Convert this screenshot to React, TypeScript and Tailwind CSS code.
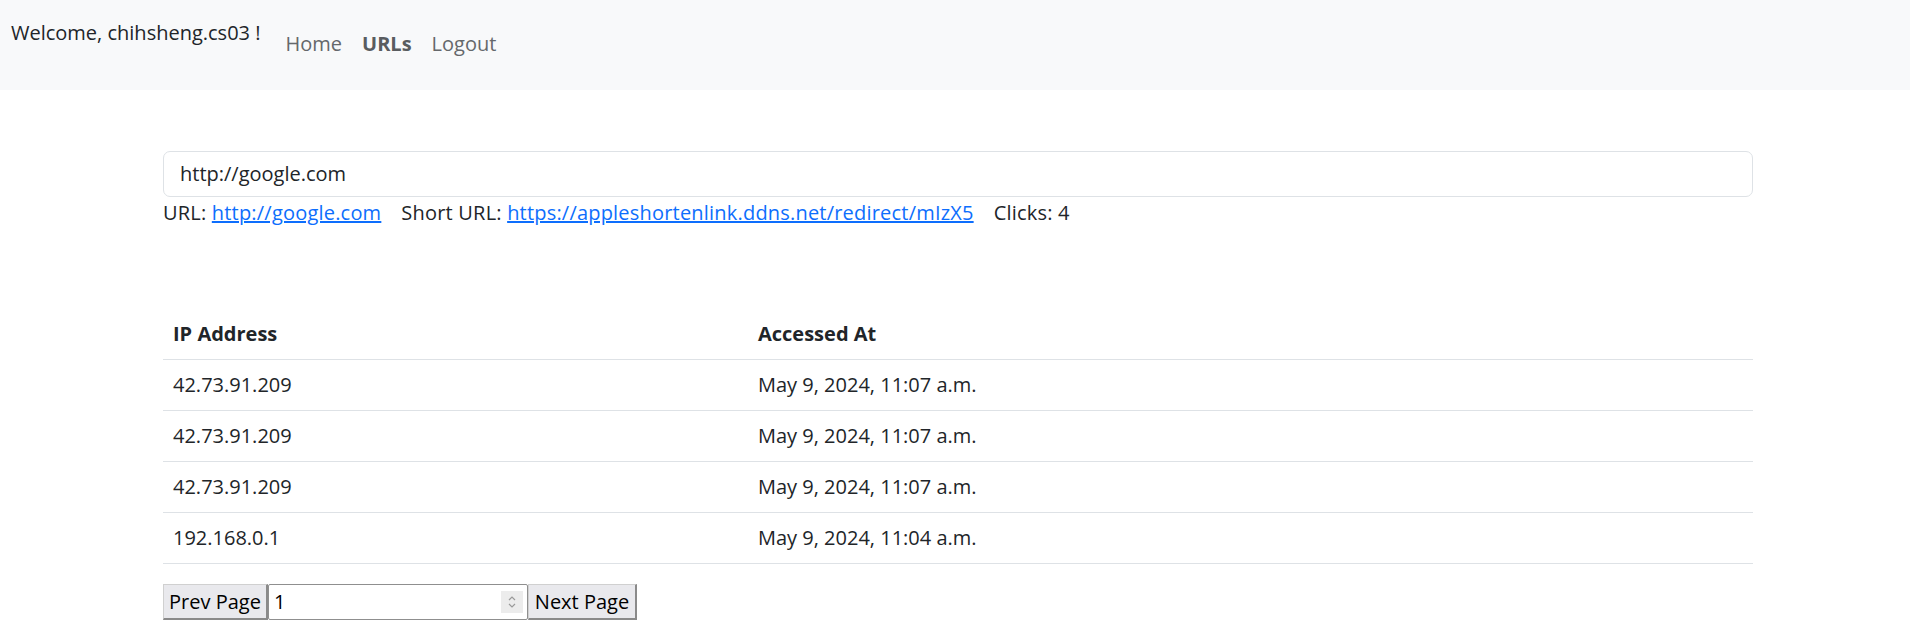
import React from "react";

const rows = [
  { ip: "42.73.91.209", at: "May 9, 2024, 11:07 a.m." },
  { ip: "42.73.91.209", at: "May 9, 2024, 11:07 a.m." },
  { ip: "42.73.91.209", at: "May 9, 2024, 11:07 a.m." },
  { ip: "192.168.0.1", at: "May 9, 2024, 11:04 a.m." },
];

export default function App() {
  return (
    <div
      className="min-h-[638px] bg-white text-[#212529] text-[20px] leading-[30px]"
      style={{ fontFamily: '"Open Sans", "Noto Sans", sans-serif' }}
    >
      <nav className="h-[90px] bg-[#f8f9fa] flex items-start">
        <div className="ml-[11px] mt-[18px] text-[#212529]">
          Welcome, chihsheng.cs03 !
        </div>
        <div className="flex ml-[25px] mt-[29px] gap-[20px] text-[#65686b]">
          <span>Home</span>
          <span className="font-bold text-[#595c5f]">URLs</span>
          <span>Logout</span>
        </div>
      </nav>

      <main className="ml-[163px] w-[1590px] pt-[61px]">
        <div className="h-[46px] border border-[#dee2e6] rounded-[7px] px-[16px] flex items-center">
          http://google.com
        </div>
        <div className="flex mt-[1px] tracking-[0.2px]">
          <span>URL:&nbsp;</span>
          <a className="text-[#0d6efd] underline" href="#">
            http://google.com
          </a>
          <span className="ml-[20px]">Short URL:&nbsp;</span>
          <a className="text-[#0d6efd] underline" href="#">
            https://appleshortenlink.ddns.net/redirect/mIzX5
          </a>
          <span className="ml-[20px]">Clicks: 4</span>
        </div>

        <div className="mt-[81px]">
          <div className="flex border-b border-[#dee2e6] font-bold h-[51px] items-center">
            <div className="w-[585px] px-[10px]">IP Address</div>
            <div className="px-[10px]">Accessed At</div>
          </div>
          {rows.map((r, i) => (
            <div
              key={i}
              className="flex border-b border-[#dee2e6] h-[51px] items-center"
            >
              <div className="w-[585px] px-[10px]">{r.ip}</div>
              <div className="px-[10px]">{r.at}</div>
            </div>
          ))}
        </div>

        <div className="flex mt-[20px] h-[36px] text-black">
          <button className="w-[105px] h-[36px] bg-[#e9e9ed] border border-[#9a9a9a] border-b-2 border-r-2 border-b-[#8a8a8a] border-r-[#8a8a8a] border-t-[#d0d0d0] border-l-[#d0d0d0] flex items-center justify-center">
            Prev Page
          </button>
          <div className="w-[260px] h-[36px] border border-[#8f8f8f] rounded-[2px] flex items-center pl-[5px] pr-[4px] bg-white">
            <span className="flex-1">1</span>
            <div className="w-[22px] h-[22px] bg-[#ececec] flex items-center justify-center">
              <svg width="10" height="16" viewBox="0 0 10 16" fill="none" stroke="#9a9a9a" strokeWidth="1.2">
                <path d="M2 6 L5 3 L8 6" />
                <path d="M2 10 L5 13 L8 10" />
              </svg>
            </div>
          </div>
          <button className="w-[109px] h-[36px] bg-[#e9e9ed] border border-[#9a9a9a] border-b-2 border-r-2 border-b-[#8a8a8a] border-r-[#8a8a8a] border-t-[#d0d0d0] border-l-[#d0d0d0] flex items-center justify-center">
            Next Page
          </button>
        </div>
      </main>
    </div>
  );
}
